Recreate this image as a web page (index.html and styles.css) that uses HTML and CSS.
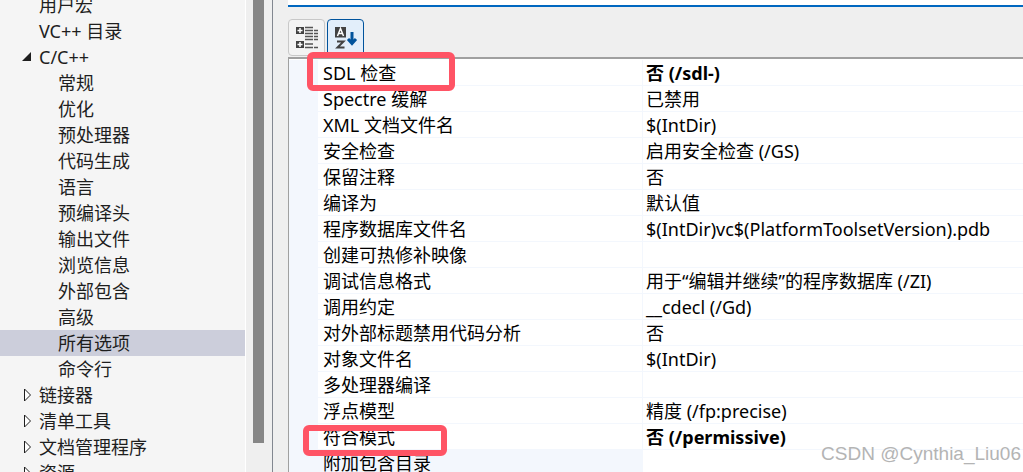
FILE: index.html
```html
<!DOCTYPE html>
<html lang="zh-CN">
<head>
<meta charset="utf-8">
<title>属性页</title>
<link rel="stylesheet" href="styles.css">
</head>
<body>
<div class="app">
  <nav class="sidebar">
    <ul class="tree" role="tree">
      <li class="item" role="treeitem">用户宏</li>
      <li class="item" role="treeitem">VC++ 目录</li>
      <li class="item" role="treeitem" aria-expanded="true"><svg class="arrow" viewBox="0 0 12 14"><path d="M10 2v9H1z" fill="#1e1e1e"/></svg>C/C++</li>
      <li class="item child" role="treeitem">常规</li>
      <li class="item child" role="treeitem">优化</li>
      <li class="item child" role="treeitem">预处理器</li>
      <li class="item child" role="treeitem">代码生成</li>
      <li class="item child" role="treeitem">语言</li>
      <li class="item child" role="treeitem">预编译头</li>
      <li class="item child" role="treeitem">输出文件</li>
      <li class="item child" role="treeitem">浏览信息</li>
      <li class="item child" role="treeitem">外部包含</li>
      <li class="item child" role="treeitem">高级</li>
      <li class="item child selected" role="treeitem" aria-selected="true">所有选项</li>
      <li class="item child" role="treeitem">命令行</li>
      <li class="item" role="treeitem" aria-expanded="false"><svg class="arrow" viewBox="0 0 12 14"><path d="M3.500 1v12l6-6z" fill="#fff" stroke="#1e1e1e"/></svg>链接器</li>
      <li class="item" role="treeitem" aria-expanded="false"><svg class="arrow" viewBox="0 0 12 14"><path d="M3.500 1v12l6-6z" fill="#fff" stroke="#1e1e1e"/></svg>清单工具</li>
      <li class="item" role="treeitem" aria-expanded="false"><svg class="arrow" viewBox="0 0 12 14"><path d="M3.500 1v12l6-6z" fill="#fff" stroke="#1e1e1e"/></svg>文档管理程序</li>
      <li class="item" role="treeitem" aria-expanded="false"><svg class="arrow" viewBox="0 0 12 14"><path d="M3.500 1v12l6-6z" fill="#fff" stroke="#1e1e1e"/></svg>资源</li>
    </ul>
    <div class="scrollbar"><div class="thumb"></div></div>
  </nav>
  <main class="content">
    <div class="search"></div>
    <div class="toolbar">
      <button class="tool" type="button" aria-label="按类别">
        <svg width="24" height="24" viewBox="0 0 24 24"><path d="M1 1h8v7H1zM1 15h8v7H1z" fill="#424242"/><path d="M5 2v5M2.500 4.500h5M5 16v5M2.500 18.500h5" stroke="#fff" stroke-width="1.500"/><path d="M10 1.500h8M10 4.500h8M10 7.500h8M10 10.500h8M10 13.500h8M10 18h8M10 21.500h8M19 4.500h4M19 7.500h4M19 10.500h4M19 13.500h4M19 21.500h4" stroke="#555" stroke-width="1.500"/></svg>
      </button>
      <button class="tool active" type="button" aria-label="按字母顺序" aria-pressed="true">
        <svg width="24" height="24" viewBox="0 0 24 24"><path d="M1 1h11v10.500H1z" fill="#424242"/><path d="M3.500 10L6.500 2.500L9.500 10M4.500 7.500h4" fill="none" stroke="#fff" stroke-width="1.500"/><path d="M3 15.500h6.500L3.500 21.500H10.500" fill="none" stroke="#424242" stroke-width="2"/><path d="M18 6v11M14 13l4 4.500l4-4.500" fill="none" stroke="#00539c" stroke-width="3"/></svg>
      </button>
    </div>
    <table class="grid">
      <colgroup><col class="col-gutter"><col class="col-name"><col></colgroup>
      <tbody>
        <tr><td class="gutter"></td><th scope="row">SDL 检查<span class="mark mark-top"></span></th><td class="changed">否 (/sdl-)</td></tr>
        <tr><td class="gutter"></td><th scope="row">Spectre 缓解</th><td>已禁用</td></tr>
        <tr><td class="gutter"></td><th scope="row">XML 文档文件名</th><td>$(IntDir)</td></tr>
        <tr><td class="gutter"></td><th scope="row">安全检查</th><td>启用安全检查 (/GS)</td></tr>
        <tr><td class="gutter"></td><th scope="row">保留注释</th><td>否</td></tr>
        <tr><td class="gutter"></td><th scope="row">编译为</th><td>默认值</td></tr>
        <tr><td class="gutter"></td><th scope="row">程序数据库文件名</th><td>$(IntDir)vc$(PlatformToolsetVersion).pdb</td></tr>
        <tr><td class="gutter"></td><th scope="row">创建可热修补映像</th><td></td></tr>
        <tr><td class="gutter"></td><th scope="row">调试信息格式</th><td>用于“编辑并继续”的程序数据库 (/ZI)</td></tr>
        <tr><td class="gutter"></td><th scope="row">调用约定</th><td>__cdecl (/Gd)</td></tr>
        <tr><td class="gutter"></td><th scope="row">对外部标题禁用代码分析</th><td>否</td></tr>
        <tr><td class="gutter"></td><th scope="row">对象文件名</th><td>$(IntDir)</td></tr>
        <tr><td class="gutter"></td><th scope="row">多处理器编译</th><td></td></tr>
        <tr><td class="gutter"></td><th scope="row">浮点模型</th><td>精度 (/fp:precise)</td></tr>
        <tr><td class="gutter"></td><th scope="row">符合模式<span class="mark mark-bottom"></span></th><td class="changed">否 (/permissive)</td></tr>
        <tr class="current"><td class="gutter"></td><th scope="row">附加包含目录</th><td></td></tr>
      </tbody>
    </table>
    <div class="watermark">CSDN @Cynthia_Liu06</div>
  </main>
</div>
</body>
</html>
```
FILE: styles.css
```css
* { box-sizing: border-box; }
body {
  margin: 0;
  font-family: "Noto Sans", "Noto Sans CJK SC", sans-serif;
  font-size: 18px;
  line-height: 26px;
  color: #000;
  background: #efefef;
}
.app { display: flex; height: 100vh; overflow: hidden; }
.sidebar { display: flex; flex: 0 0 273px; border-right: 1px solid #828790; color: #1e1e1e; }
.tree {
  flex: 1;
  margin: -8px 0 0;
  padding: 0;
  list-style: none;
  background: #f5f5f5;
}
.item { display: flex; align-items: center; height: 26px; padding-left: 39px; white-space: nowrap; }
.child { padding-left: 58px; }
.selected { background: #cccedb; }
.arrow { width: 12px; height: 14px; margin: 0 6px 0 -18px; }
.scrollbar { width: 27px; padding-left: 7px; border-left: 1px solid #fff; }
.thumb { width: 11px; height: 443px; background: #868686; }
.content { position: relative; flex: 1; min-width: 0; padding-left: 15px; }
.search { height: 7px; background: #fff; border-bottom: 2px solid #0067c0; }
.toolbar { display: flex; gap: 2px; height: 50px; padding-top: 12px; }
.tool {
  display: flex;
  align-items: center;
  justify-content: center;
  width: 37px;
  height: 37px;
  padding: 0;
  background: #f3f3f3;
  border: 1px solid #c8c8c8;
  border-radius: 4px;
}
.active { background: #e2eefa; border-color: #00539c; }
.grid {
  width: 100%;
  padding-top: 1px;
  table-layout: fixed;
  border-collapse: separate;
  border-spacing: 0;
  border-top: 2px solid #a0a0a0;
  border-left: 1px solid #a0a0a0;
  background: #fff;
}
.col-gutter { width: 29px; }
.col-name { width: 325px; }
.grid th, .grid td {
  position: relative;
  height: 26px;
  padding: 1px 0 0 3px;
  border-bottom: 1px solid #f3f7fd;
  font-weight: 400;
  line-height: 24px;
  text-align: left;
  white-space: nowrap;
}
.grid th { padding-left: 5px; border-right: 1px solid #f3f7fd; }
.grid .gutter, .current th { background: #f3f7fd; }
.grid .changed { font-weight: 700; }
.mark { position: absolute; z-index: 1; border: 6px solid #ff5465; border-radius: 6px; }
.mark-top { left: -11px; top: -8px; width: 148px; height: 39px; }
.mark-bottom { left: -15px; top: 1px; width: 144px; height: 31px; }
.watermark {
  position: absolute;
  right: 2px;
  bottom: 5px;
  font-family: "Liberation Sans", sans-serif;
  font-size: 19px;
  color: #b4b4b4;
}
```
